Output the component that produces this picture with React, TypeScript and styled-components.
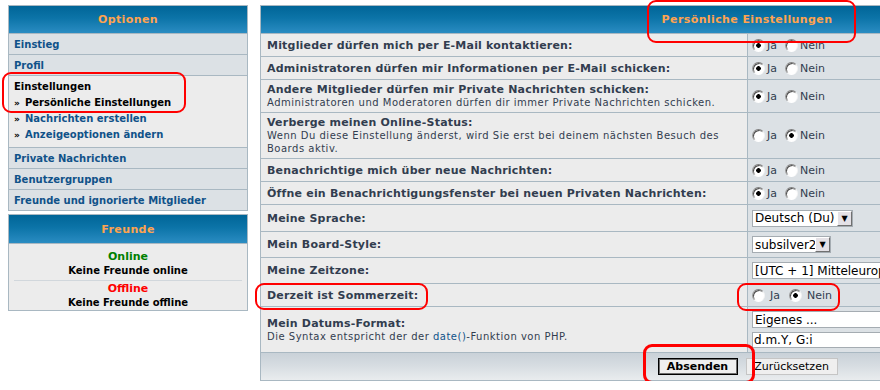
import React from "react"
import styled, { createGlobalStyle } from "styled-components"

const GlobalStyle = createGlobalStyle`
  html, body {
    margin: 0;
    padding: 0;
    overflow: hidden;
    background: #ffffff;
  }
  body {
    font-family: "DejaVu Sans", Verdana, sans-serif;
    color: #323d4f;
  }
`

const Page = styled.div`
  position: relative;
  display: flex;
  align-items: flex-start;
  gap: 12px;
  padding: 5px 0 0 8px;
  width: 1300px;
`

const Sidebar = styled.div`
  flex: none;
  width: 240px;
  display: flex;
  flex-direction: column;
  gap: 3px;
`

// tables in subsilver2 are a grey background with 1px cellspacing
const Panel = styled.div<{ $width?: number }>`
  flex: none;
  width: ${(p) => (p.$width ? `${p.$width}px` : "auto")};
  display: flex;
  flex-direction: column;
  gap: 1px;
  border: 1px solid #a9b8c2;
  background: #a9b8c2;
`

const Head = styled.div<{ $h: number }>`
  height: ${(p) => p.$h}px;
  display: flex;
  align-items: center;
  justify-content: center;
  background: linear-gradient(#006597 0%, #0c74a8 45%, #2a8cc2 100%);
  color: #ffa34f;
  font-weight: bold;
  font-size: 11px;
  letter-spacing: 0.4px;
`

const MenuRow = styled.div<{ $active?: boolean }>`
  height: 20px;
  display: flex;
  align-items: center;
  padding-left: 5px;
  background: ${(p) => (p.$active ? "#ececec" : "#dce1e5")};
  font-size: 10px;
  font-weight: bold;
  color: #105289;
`

const MenuSection = styled.div`
  height: 71px;
  display: flex;
  flex-direction: column;
  padding: 3px 0 0 5px;
  box-sizing: border-box;
  background: #ececec;
  font-size: 10px;
  font-weight: bold;
`

const SectionLine = styled.div<{ $current?: boolean }>`
  height: 16px;
  line-height: 16px;
  color: ${(p) => (p.$current ? "#000000" : "#105289")};
  white-space: nowrap;
`

const Arrow = styled.span`
  display: inline-block;
  width: 11px;
  font-size: 9px;
  color: #000000;
`

const FriendsBox = styled.div`
  height: 66px;
  display: flex;
  flex-direction: column;
  align-items: center;
  padding-top: 6px;
  box-sizing: border-box;
  background: #ececec;
`

const StatusTitle = styled.div<{ $color: string }>`
  font-size: 11px;
  font-weight: bold;
  line-height: 14px;
  color: ${(p) => p.$color};
`

const StatusText = styled.div`
  font-size: 10px;
  font-weight: bold;
  line-height: 14px;
  color: #000000;
`

const Divider = styled.div`
  align-self: stretch;
  margin: 2px 5px 1px;
  height: 1px;
  background: #d1d7dc;
`

const Row = styled.div<{ $h: number }>`
  height: ${(p) => p.$h}px;
  display: grid;
  grid-template-columns: 486px 1fr;
  gap: 1px;
`

const Label = styled.div`
  display: flex;
  flex-direction: column;
  justify-content: center;
  padding-left: 6px;
  background: #ececec;
`

const LabelTitle = styled.div`
  font-size: 11px;
  font-weight: bold;
  line-height: 13px;
  letter-spacing: 0.2px;
  color: #323d4f;
  white-space: nowrap;
`

const Explain = styled.div`
  font-size: 10px;
  line-height: 13px;
  letter-spacing: 0.5px;
  color: #323d4f;
  padding-right: 20px;
`

const Code = styled.span`
  color: #105289;
`

const Options = styled.div<{ $stack?: boolean }>`
  display: flex;
  flex-direction: ${(p) => (p.$stack ? "column" : "row")};
  justify-content: center;
  align-items: ${(p) => (p.$stack ? "flex-start" : "center")};
  gap: ${(p) => (p.$stack ? "4px" : "0")};
  padding-left: 4px;
  background: #dce1e5;
  overflow: hidden;
  justify-content: ${(p) => (p.$stack ? "center" : "flex-start")};
`

const RadioLabel = styled.label<{ $spaced?: boolean }>`
  display: flex;
  align-items: center;
  gap: ${(p) => (p.$spaced ? "5px" : "2px")};
  margin-right: ${(p) => (p.$spaced ? "9px" : "8px")};
  font-size: 11px;
  color: #323d4f;
`

const RadioDot = styled.span<{ $on?: boolean }>`
  display: inline-block;
  width: 13px;
  height: 13px;
  box-sizing: border-box;
  border-radius: 50%;
  border: 1px solid;
  border-color: #808080 #f4f4f4 #ffffff #9a9a9a;
  box-shadow: inset 1px 1px 0 #505050;
  background: ${(p) =>
    p.$on
      ? "radial-gradient(circle at 50% 50%, #000 0, #000 2px, #fff 2.6px)"
      : "#ffffff"};
`

const SelectBox = styled.div<{ $w: number }>`
  width: ${(p) => p.$w}px;
  height: 17px;
  display: flex;
  align-items: center;
  box-sizing: border-box;
  border: 1px solid #a5acb2;
  background: #ffffff;
  font-size: 12px;
  color: #000000;
  white-space: nowrap;
  overflow: hidden;
`

const SelectText = styled.span`
  flex: 1;
  padding-left: 2px;
  overflow: hidden;
`

const SelectButton = styled.span`
  flex: none;
  width: 15px;
  height: 15px;
  display: flex;
  align-items: center;
  justify-content: center;
  box-sizing: border-box;
  border: 1px solid;
  border-color: #ffffff #707070 #707070 #ffffff;
  background: #e4e1e6;
  font-size: 8px;
  color: #000000;
`

const TextInput = styled.div`
  width: 300px;
  height: 16px;
  display: flex;
  align-items: center;
  box-sizing: border-box;
  border: 1px solid #a5acb2;
  background: #ffffff;
  padding-left: 1px;
  font-size: 12px;
  color: #000000;
`

const Footer = styled.div`
  height: 27px;
  display: flex;
  align-items: center;
  justify-content: center;
  gap: 8px;
  padding-left: 1px;
  background: linear-gradient(#c9d1d8 0%, #d6dce1 45%, #e9ecee 100%);
`

const Button = styled.button<{ $main?: boolean; $w: number }>`
  width: ${(p) => p.$w}px;
  height: 17px;
  padding: 0;
  margin: 0;
  box-sizing: border-box;
  border: 1px solid ${(p) => (p.$main ? "#000000" : "#c5c5c5")};
  box-shadow: ${(p) => (p.$main ? "inset 0 0 0 1px #6d6d6d" : "none")};
  background: #efefef;
  font-family: "DejaVu Sans", Verdana, sans-serif;
  font-size: 11px;
  font-weight: ${(p) => (p.$main ? "bold" : "normal")};
  color: #000000;
`

// red marker boxes drawn over the screenshot
const Marker = styled.div<{ $x: number; $y: number; $w: number; $h: number; $t?: number }>`
  position: absolute;
  left: ${(p) => p.$x}px;
  top: ${(p) => p.$y}px;
  width: ${(p) => p.$w}px;
  height: ${(p) => p.$h}px;
  box-sizing: border-box;
  border: ${(p) => p.$t || 2}px solid #ff0000;
  border-radius: 9px;
  pointer-events: none;
`

type Choice = { label: string; rows: number; explain?: React.ReactNode; yes: boolean }

const choices: Choice[] = [
  { label: "Mitglieder dürfen mich per E-Mail kontaktieren:", rows: 22, yes: true },
  { label: "Administratoren dürfen mir Informationen per E-Mail schicken:", rows: 22, yes: true },
  {
    label: "Andere Mitglieder dürfen mir Private Nachrichten schicken:",
    rows: 32,
    yes: true,
    explain: "Administratoren und Moderatoren dürfen dir immer Private Nachrichten schicken.",
  },
  {
    label: "Verberge meinen Online-Status:",
    rows: 45,
    yes: false,
    explain: "Wenn Du diese Einstellung änderst, wird Sie erst bei deinem nächsten Besuch des Boards aktiv.",
  },
  { label: "Benachrichtige mich über neue Nachrichten:", rows: 22, yes: true },
  { label: "Öffne ein Benachrichtigungsfenster bei neuen Privaten Nachrichten:", rows: 22, yes: true },
]

const YesNo = ({ yes, spaced }: { yes: boolean; spaced?: boolean }) => (
  <>
    <RadioLabel $spaced={spaced}>
      <RadioDot $on={yes} />
      Ja
    </RadioLabel>
    <RadioLabel $spaced={spaced}>
      <RadioDot $on={!yes} />
      Nein
    </RadioLabel>
  </>
)

const Select = ({ w, text }: { w: number; text: string }) => (
  <SelectBox $w={w}>
    <SelectText>{text}</SelectText>
    <SelectButton>▼</SelectButton>
  </SelectBox>
)

const App = () => {
  return (
    <>
      <GlobalStyle />
      <Page>
        <Sidebar>
          <Panel>
            <Head $h={27}>Optionen</Head>
            <MenuRow>Einstieg</MenuRow>
            <MenuRow>Profil</MenuRow>
            <MenuSection>
              <SectionLine $current>Einstellungen</SectionLine>
              <SectionLine $current>
                <Arrow>»</Arrow>Persönliche Einstellungen
              </SectionLine>
              <SectionLine>
                <Arrow>»</Arrow>Nachrichten erstellen
              </SectionLine>
              <SectionLine>
                <Arrow>»</Arrow>Anzeigeoptionen ändern
              </SectionLine>
            </MenuSection>
            <MenuRow>Private Nachrichten</MenuRow>
            <MenuRow>Benutzergruppen</MenuRow>
            <MenuRow>Freunde und ignorierte Mitglieder</MenuRow>
          </Panel>
          <Panel>
            <Head $h={28}>Freunde</Head>
            <FriendsBox>
              <StatusTitle $color="#008000">Online</StatusTitle>
              <StatusText>Keine Freunde online</StatusText>
              <Divider />
              <StatusTitle $color="#ff0000">Offline</StatusTitle>
              <StatusText>Keine Freunde offline</StatusText>
            </FriendsBox>
          </Panel>
        </Sidebar>

        <Panel $width={972}>
          <Head $h={27}>Persönliche Einstellungen</Head>
          {choices.map((c) => (
            <Row key={c.label} $h={c.rows}>
              <Label>
                <LabelTitle>{c.label}</LabelTitle>
                {c.explain && <Explain>{c.explain}</Explain>}
              </Label>
              <Options>
                <YesNo yes={c.yes} />
              </Options>
            </Row>
          ))}
          <Row $h={26}>
            <Label>
              <LabelTitle>Meine Sprache:</LabelTitle>
            </Label>
            <Options>
              <Select w={101} text="Deutsch (Du)" />
            </Options>
          </Row>
          <Row $h={25}>
            <Label>
              <LabelTitle>Mein Board-Style:</LabelTitle>
            </Label>
            <Options>
              <Select w={79} text="subsilver2" />
            </Options>
          </Row>
          <Row $h={25}>
            <Label>
              <LabelTitle>Meine Zeitzone:</LabelTitle>
            </Label>
            <Options>
              <Select w={320} text="[UTC + 1] Mitteleuropäische Zeit" />
            </Options>
          </Row>
          <Row $h={22}>
            <Label>
              <LabelTitle>Derzeit ist Sommerzeit:</LabelTitle>
            </Label>
            <Options>
              <YesNo yes={false} spaced />
            </Options>
          </Row>
          <Row $h={45}>
            <Label>
              <LabelTitle>Mein Datums-Format:</LabelTitle>
              <Explain>
                Die Syntax entspricht der der <Code>date()</Code>-Funktion von PHP.
              </Explain>
            </Label>
            <Options $stack>
              <Select w={300} text="Eigenes ..." />
              <TextInput>d.m.Y, G:i</TextInput>
            </Options>
          </Row>
          <Footer>
            <Button $main $w={80}>
              Absenden
            </Button>
            <Button $w={92}>Zurücksetzen</Button>
          </Footer>
        </Panel>

        <Marker $x={2} $y={72} $w={184} $h={41} />
        <Marker $x={647} $y={0} $w={209} $h={43} />
        <Marker $x={255} $y={283} $w={173} $h={27} />
        <Marker $x={737} $y={283} $w={103} $h={28} />
        <Marker $x={643} $y={344} $w={112} $h={40} $t={3} />
      </Page>
    </>
  )
}

export default App
